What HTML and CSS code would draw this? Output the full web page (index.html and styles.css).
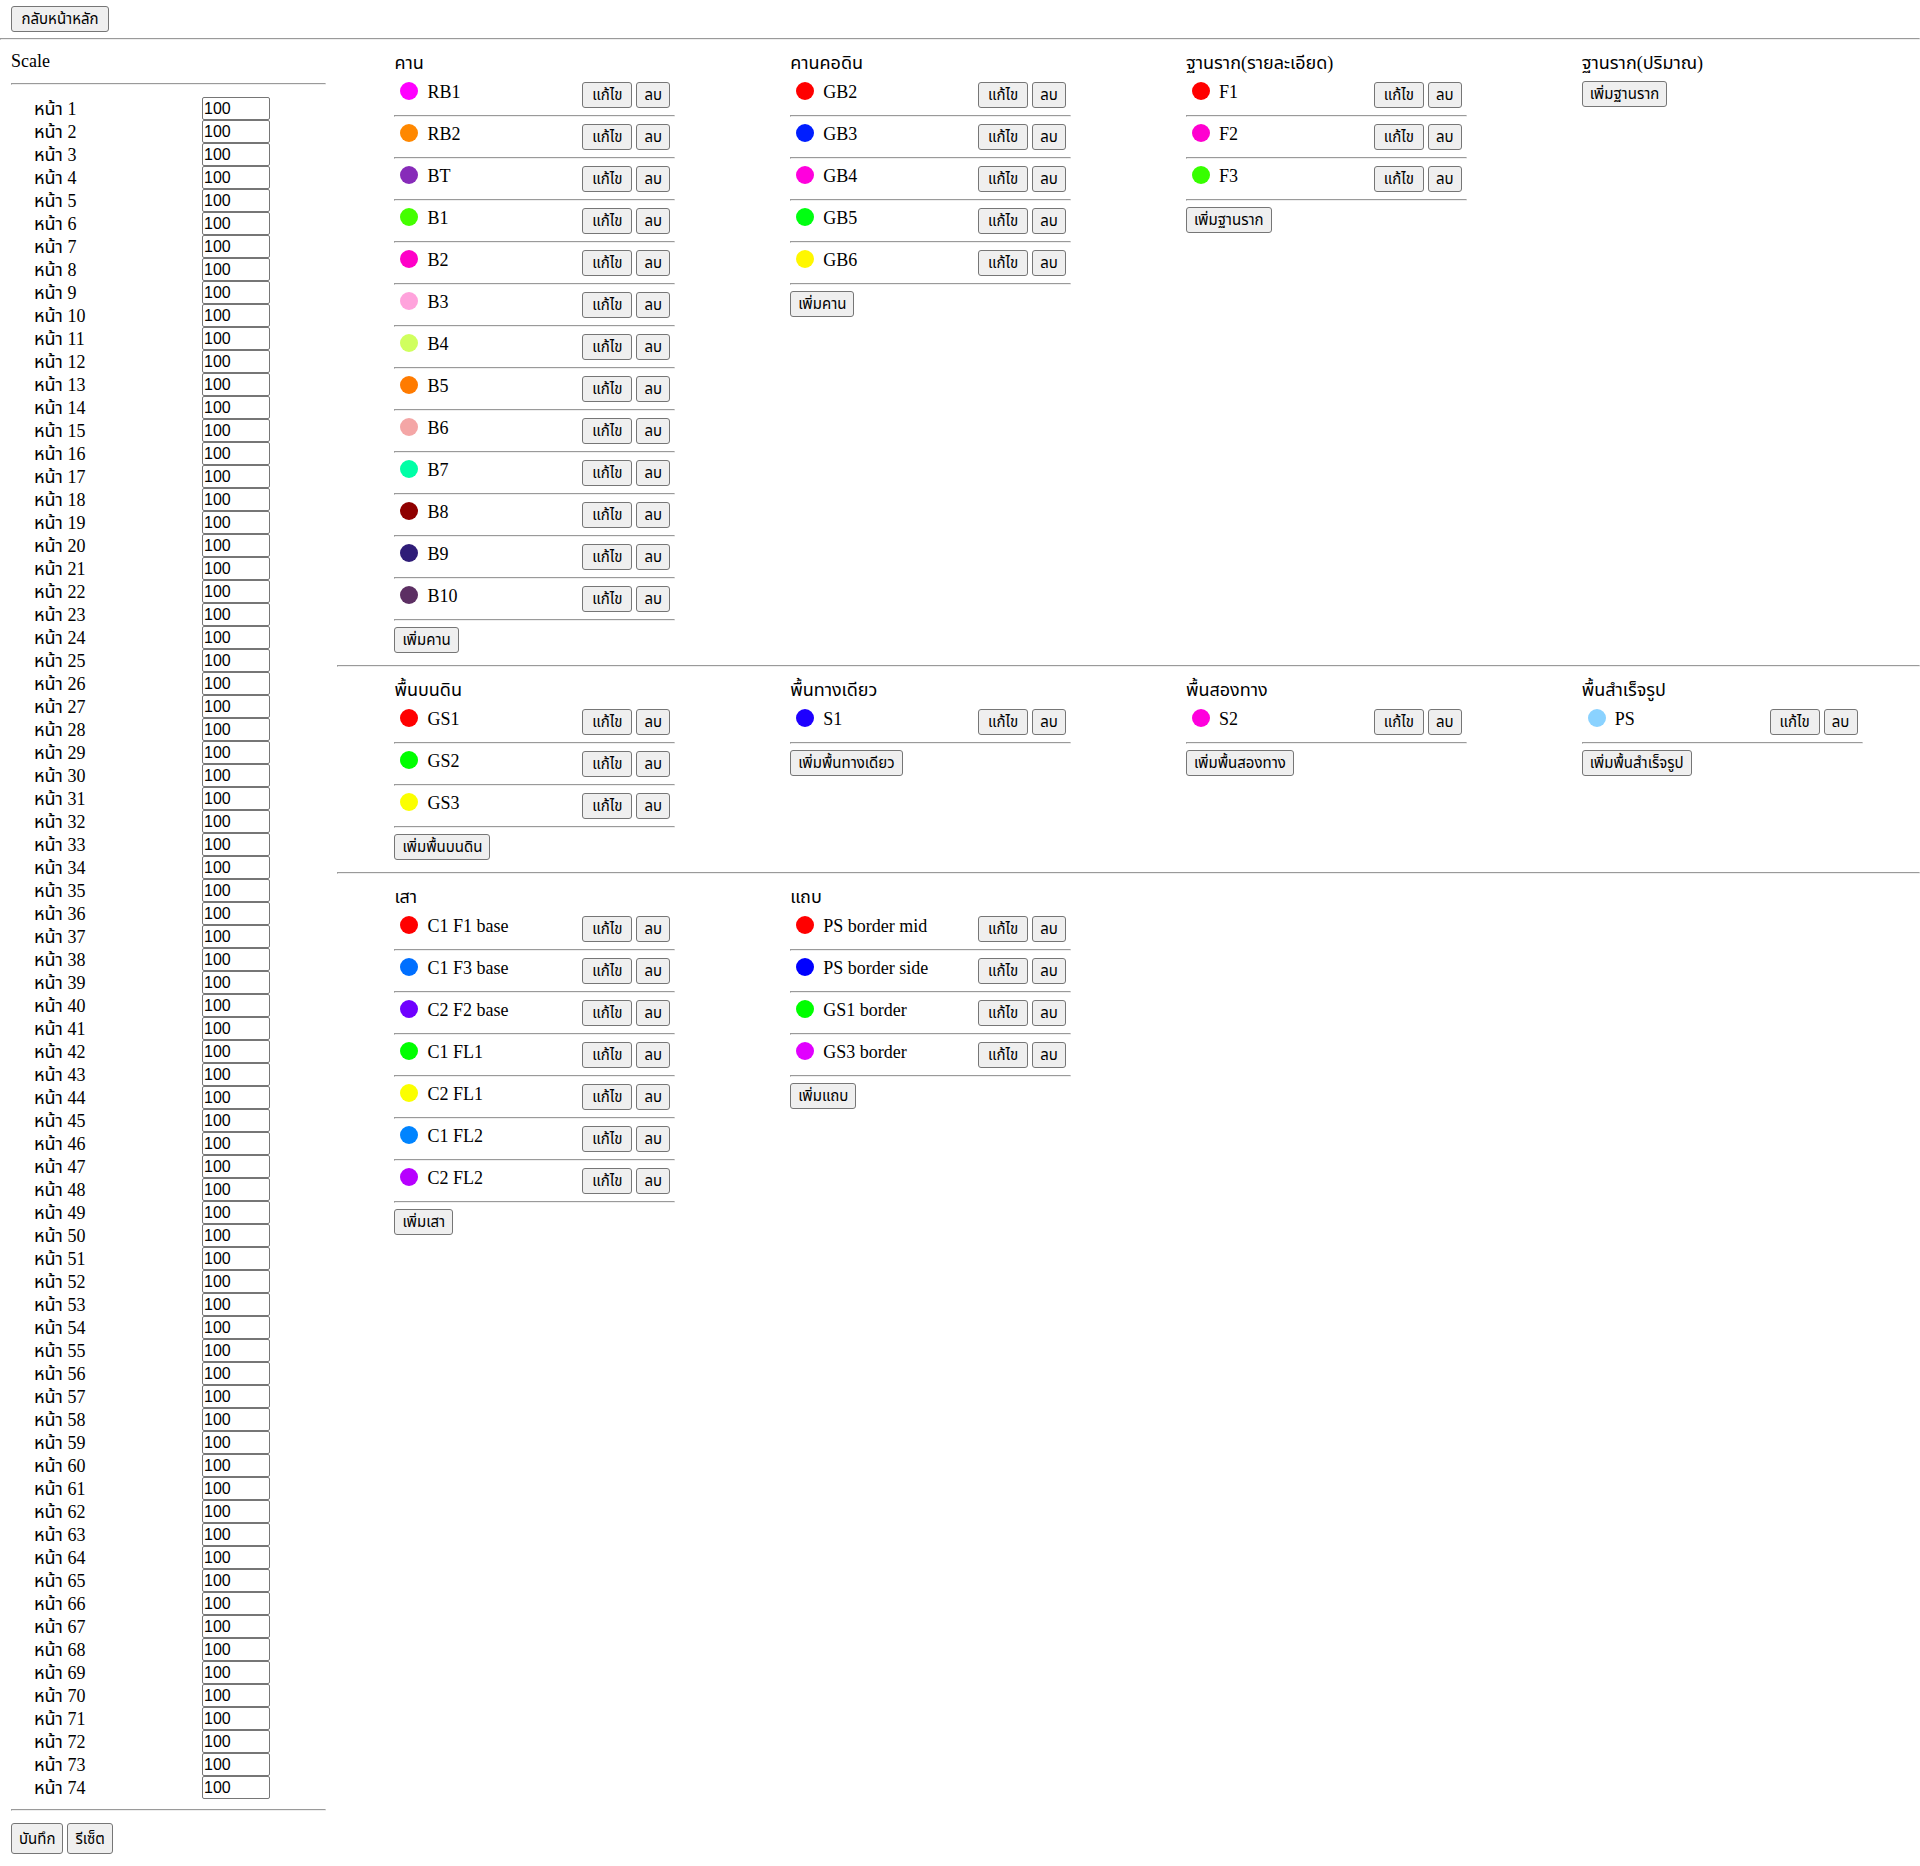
FILE: index.html
```
<!DOCTYPE html>
<html lang="th">
<head>
<meta charset="utf-8">
<title>Scale</title>
<link rel="stylesheet" href="styles.css">
</head>
<body>
<header class="topbar"><button type="button" class="btn btn-back">กลับหน้าหลัก</button></header>
<hr class="rule">
<div class="layout">
  <form class="sidebar">
    <div class="sidebar-title">Scale</div>
    <hr class="rule">
    <div class="pages" id="pages"></div>
    <hr class="rule">
    <div class="form-actions">
      <button type="submit" class="btn btn-tall">บันทึก</button>
      <button type="reset" class="btn btn-tall">รีเซ็ต</button>
    </div>
  </form>
  <main class="main" id="main"></main>
</div>
<script src="app.js"></script>
</body>
</html>
```
FILE: styles.css
```
body {
  margin: 0;
  background: #fff;
  color: #000;
  font: 18px/20px "Liberation Serif", "Times New Roman", "Noto Sans Thai", Tahoma, serif;
}

.topbar {
  padding: 6px 11px;
}

.rule {
  margin: 0;
}

.btn {
  height: 26px;
  padding: 0 7px;
  border: 1px solid #767676;
  border-radius: 3px;
  background: #efefef;
  color: #000;
  font: 15px/24px "Liberation Sans", Arial, "Noto Sans Thai", Tahoma, sans-serif;
  white-space: nowrap;
  display: block;
}

.btn-back {
  min-width: 98px;
}

.btn-edit {
  min-width: 50px;
}

.btn-delete {
  min-width: 34px;
}

.btn-tall {
  height: 31px;
}

.layout {
  display: flex;
  align-items: flex-start;
}

.sidebar {
  box-sizing: border-box;
  flex: 0 0 337px;
  padding: 0 11px 12px;
}

.sidebar-title {
  padding: 11px 0 12px;
}

.pages {
  padding: 12px 0 10px 23px;
}

.page-row {
  display: flex;
  height: 23px;
  line-height: 24px;
}

.page-row label {
  flex: 0 0 168px;
}

.page-row input {
  box-sizing: border-box;
  width: 68px;
  height: 23px;
  margin: 0;
  padding: 0 1px;
  border: 1px solid #767676;
  border-radius: 2px;
  background: #fff;
  color: #000;
  font: 16px "Liberation Sans", Arial, sans-serif;
}

.form-actions {
  display: flex;
  gap: 4px;
  padding-top: 12px;
}

.main {
  flex: 1;
  min-width: 0;
}

.band {
  display: grid;
  grid-template-columns: repeat(4, minmax(0, 1fr));
  padding-bottom: 12px;
}

.group {
  width: 71%;
  margin: 0 auto;
}

.group-title {
  margin: 0;
  padding: 11px 0 6px;
  font-size: 18px;
  line-height: 24px;
  font-weight: normal;
}

.item {
  display: flex;
  align-items: flex-start;
  gap: 4px;
  padding: 1px 5px 7px 6px;
}

.dot {
  width: 18px;
  height: 18px;
  margin-right: 5px;
  border-radius: 50%;
}

.item-name {
  flex: 1;
}

.group .rule {
  margin-bottom: 6px;
}
```
FILE: app.js
```
const bands = [
  [
    { title: 'คาน', add: 'เพิ่มคาน', items: [
      ['RB1', '#ff00ff'], ['RB2', '#ff8800'], ['BT', '#872bb9'], ['B1', '#44ff00'],
      ['B2', '#ff00c8'], ['B3', '#ffa3dc'], ['B4', '#d0ff5e'], ['B5', '#ff7b00'],
      ['B6', '#f4a6a6'], ['B7', '#00ffa6'], ['B8', '#8f0000'], ['B9', '#2f1d78'],
      ['B10', '#5c2f63']] },
    { title: 'คานคอดิน', add: 'เพิ่มคาน', items: [
      ['GB2', '#ff0000'], ['GB3', '#001eff'], ['GB4', '#ff00dd'], ['GB5', '#00ff11'],
      ['GB6', '#fff700']] },
    { title: 'ฐานราก(รายละเอียด)', add: 'เพิ่มฐานราก', items: [
      ['F1', '#ff0000'], ['F2', '#ff00d0'], ['F3', '#37ff00']] },
    { title: 'ฐานราก(ปริมาณ)', add: 'เพิ่มฐานราก', items: [] },
  ],
  [
    { title: 'พื้นบนดิน', add: 'เพิ่มพื้นบนดิน', items: [
      ['GS1', '#ff0000'], ['GS2', '#00ff00'], ['GS3', '#fbff00']] },
    { title: 'พื้นทางเดียว', add: 'เพิ่มพื้นทางเดียว', items: [['S1', '#1e00ff']] },
    { title: 'พื้นสองทาง', add: 'เพิ่มพื้นสองทาง', items: [['S2', '#ff00dd']] },
    { title: 'พื้นสำเร็จรูป', add: 'เพิ่มพื้นสำเร็จรูป', items: [['PS', '#8ad2ff']] },
  ],
  [
    { title: 'เสา', add: 'เพิ่มเสา', items: [
      ['C1 F1 base', '#ff0000'], ['C1 F3 base', '#006fff'], ['C2 F2 base', '#6f00ff'],
      ['C1 FL1', '#00ff00'], ['C2 FL1', '#fbff00'], ['C1 FL2', '#0084ff'],
      ['C2 FL2', '#b700ff']] },
    { title: 'แถบ', add: 'เพิ่มแถบ', items: [
      ['PS border mid', '#ff0000'], ['PS border side', '#0000ff'],
      ['GS1 border', '#00ff00'], ['GS3 border', '#e100ff']] },
  ],
];

const button = (text, kind) => `<button type="button" class="btn btn-${kind}">${text}</button>`;

const item = ([name, color]) => `
  <div class="item">
    <span class="dot" style="background:${color}"></span>
    <span class="item-name">${name}</span>
    ${button('แก้ไข', 'edit')}${button('ลบ', 'delete')}
  </div>
  <hr class="rule">`;

const group = (g) => `
  <section class="group">
    <h2 class="group-title">${g.title}</h2>
    ${g.items.map(item).join('')}
    ${button(g.add, 'add')}
  </section>`;

document.getElementById('main').innerHTML = bands
  .map((groups) => `<div class="band">${groups.map(group).join('')}</div>`)
  .join('<hr class="rule">');

document.getElementById('pages').innerHTML = Array.from({ length: 74 }, (_, i) => `
  <div class="page-row">
    <label for="page-${i + 1}">หน้า ${i + 1}</label>
    <input type="text" id="page-${i + 1}" value="100">
  </div>`).join('');
```
